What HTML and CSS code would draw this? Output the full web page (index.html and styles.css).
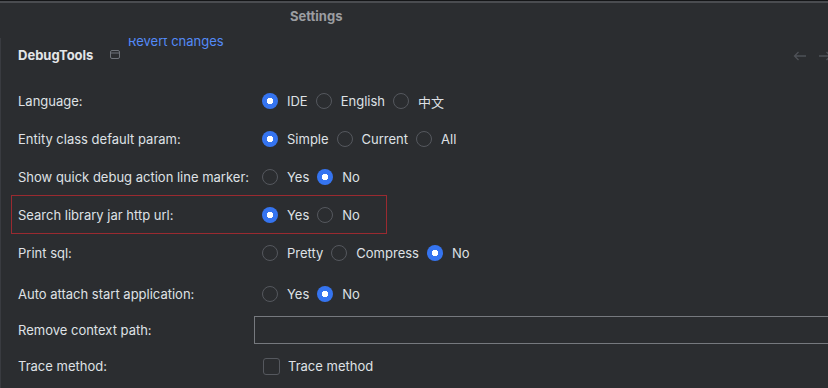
FILE: index.html
```html
<!DOCTYPE html>
<html lang="en">
<head>
    <meta charset="UTF-8">
    <meta name="viewport" content="width=device-width, initial-scale=1.0">
    <title>Settings</title>
    <link rel="stylesheet" href="styles.css">
</head>
<body>
    <div class="window">
        <div class="title-bar">Settings</div>

        <div class="content">
            <div class="panel-header">
                <a class="revert-link">Revert changes</a>
                <span class="panel-title">DebugTools</span>
                <svg class="window-icon" width="10" height="9" viewBox="0 0 10 9">
                    <rect x="0.5" y="0.5" width="9" height="8" rx="1.5" fill="none" stroke="#6f737a"/>
                    <line x1="1" y1="3" x2="9" y2="3" stroke="#6f737a"/>
                </svg>
                <div class="nav-arrows">
                    <svg width="14" height="10" viewBox="0 0 14 10">
                        <path d="M13 5H1.5M5.5 1L1.5 5l4 4" fill="none" stroke="#4e5157" stroke-width="1.3"/>
                    </svg>
                    <svg width="14" height="10" viewBox="0 0 14 10">
                        <path d="M1 5h11.5M8.5 1l4 4-4 4" fill="none" stroke="#4e5157" stroke-width="1.3"/>
                    </svg>
                </div>
            </div>

            <div class="form">
                <div class="row">
                    <span class="label">Language:</span>
                    <div class="options">
                        <span class="radio checked"></span><span class="opt-text">IDE</span>
                        <span class="radio"></span><span class="opt-text">English</span>
                        <span class="radio"></span><span class="opt-text">中文</span>
                    </div>
                </div>
                <div class="row">
                    <span class="label">Entity class default param:</span>
                    <div class="options">
                        <span class="radio checked"></span><span class="opt-text">Simple</span>
                        <span class="radio"></span><span class="opt-text">Current</span>
                        <span class="radio"></span><span class="opt-text">All</span>
                    </div>
                </div>
                <div class="row">
                    <span class="label">Show quick debug action line marker:</span>
                    <div class="options">
                        <span class="radio"></span><span class="opt-text">Yes</span>
                        <span class="radio checked"></span><span class="opt-text">No</span>
                    </div>
                </div>
                <div class="row highlighted">
                    <span class="label">Search library jar http url:</span>
                    <div class="options">
                        <span class="radio checked"></span><span class="opt-text">Yes</span>
                        <span class="radio"></span><span class="opt-text">No</span>
                    </div>
                </div>
                <div class="row">
                    <span class="label">Print sql:</span>
                    <div class="options">
                        <span class="radio"></span><span class="opt-text">Pretty</span>
                        <span class="radio"></span><span class="opt-text">Compress</span>
                        <span class="radio checked"></span><span class="opt-text">No</span>
                    </div>
                </div>
                <div class="row row-tall">
                    <span class="label">Auto attach start application:</span>
                    <div class="options">
                        <span class="radio"></span><span class="opt-text">Yes</span>
                        <span class="radio checked"></span><span class="opt-text">No</span>
                    </div>
                </div>
                <div class="row row-input">
                    <span class="label">Remove context path:</span>
                    <div class="text-field"></div>
                </div>
                <div class="row row-tall">
                    <span class="label">Trace method:</span>
                    <div class="options">
                        <span class="checkbox"></span><span class="opt-text">Trace method</span>
                    </div>
                </div>
            </div>
        </div>
    </div>
</body>
</html>
```

FILE: styles.css
```css
body {
    margin: 0;
    background-color: #2b2d30;
    font-family: Inter, 'Noto Sans', 'Noto Sans CJK SC', sans-serif;
    font-size: 13px;
    color: #dfe1e5;
    overflow: hidden;
}
.window {
    width: 828px;
    height: 388px;
    overflow: hidden;
    border-top: 1px solid #141517;
}
.title-bar {
    height: 30px;
    border-top: 2px solid #4a4c50;
    box-sizing: border-box;
    padding-left: 290px;
    line-height: 26px;
    font-weight: 700;
    color: #9b9da1;
}
.content {
    border-left: 1px solid #393b40;
}
.panel-header {
    position: relative;
    height: 44px;
    margin-top: 7px;
    overflow: hidden;
    display: flex;
    align-items: center;
    padding-left: 17px;
    padding-bottom: 10px;
    box-sizing: border-box;
}
.revert-link {
    position: absolute;
    left: 127px;
    top: -5px;
    color: #548af7;
    line-height: 16px;
}
.panel-title {
    font-weight: 700;
    color: #e3e5e8;
}
.window-icon {
    margin-left: 17px;
    margin-top: -1px;
}
.nav-arrows {
    margin-left: auto;
    margin-right: -4px;
    margin-top: 2px;
    display: flex;
    gap: 11px;
}
.form {
    padding-left: 17px;
}
.row {
    display: flex;
    align-items: center;
    height: 38px;
    position: relative;
}
.row-tall {
    height: 44px;
}
.row-input {
    height: 28px;
}
.highlighted::after {
    content: "";
    position: absolute;
    left: -7px;
    top: -1px;
    width: 374px;
    height: 37px;
    border: 1px solid #9a2a30;
}
.label {
    width: 236px;
    flex-shrink: 0;
}
.options {
    display: flex;
    align-items: center;
    padding-left: 8px;
}
.radio {
    width: 14px;
    height: 14px;
    border: 1px solid #55585e;
    border-radius: 50%;
    flex-shrink: 0;
    margin-right: 9px;
}
.radio.checked {
    width: 16px;
    height: 16px;
    border: none;
    background: radial-gradient(circle, #ffffff 0 3px, #3574f0 3.5px);
}
.opt-text {
    margin-right: 8px;
}
.checkbox {
    width: 15px;
    height: 15px;
    border: 1px solid #55585e;
    border-radius: 3px;
    margin-left: 1px;
    margin-right: 8px;
}
.text-field {
    flex: 1;
    height: 26px;
    border: 1px solid #76797e;
    border-right: none;
}
```
